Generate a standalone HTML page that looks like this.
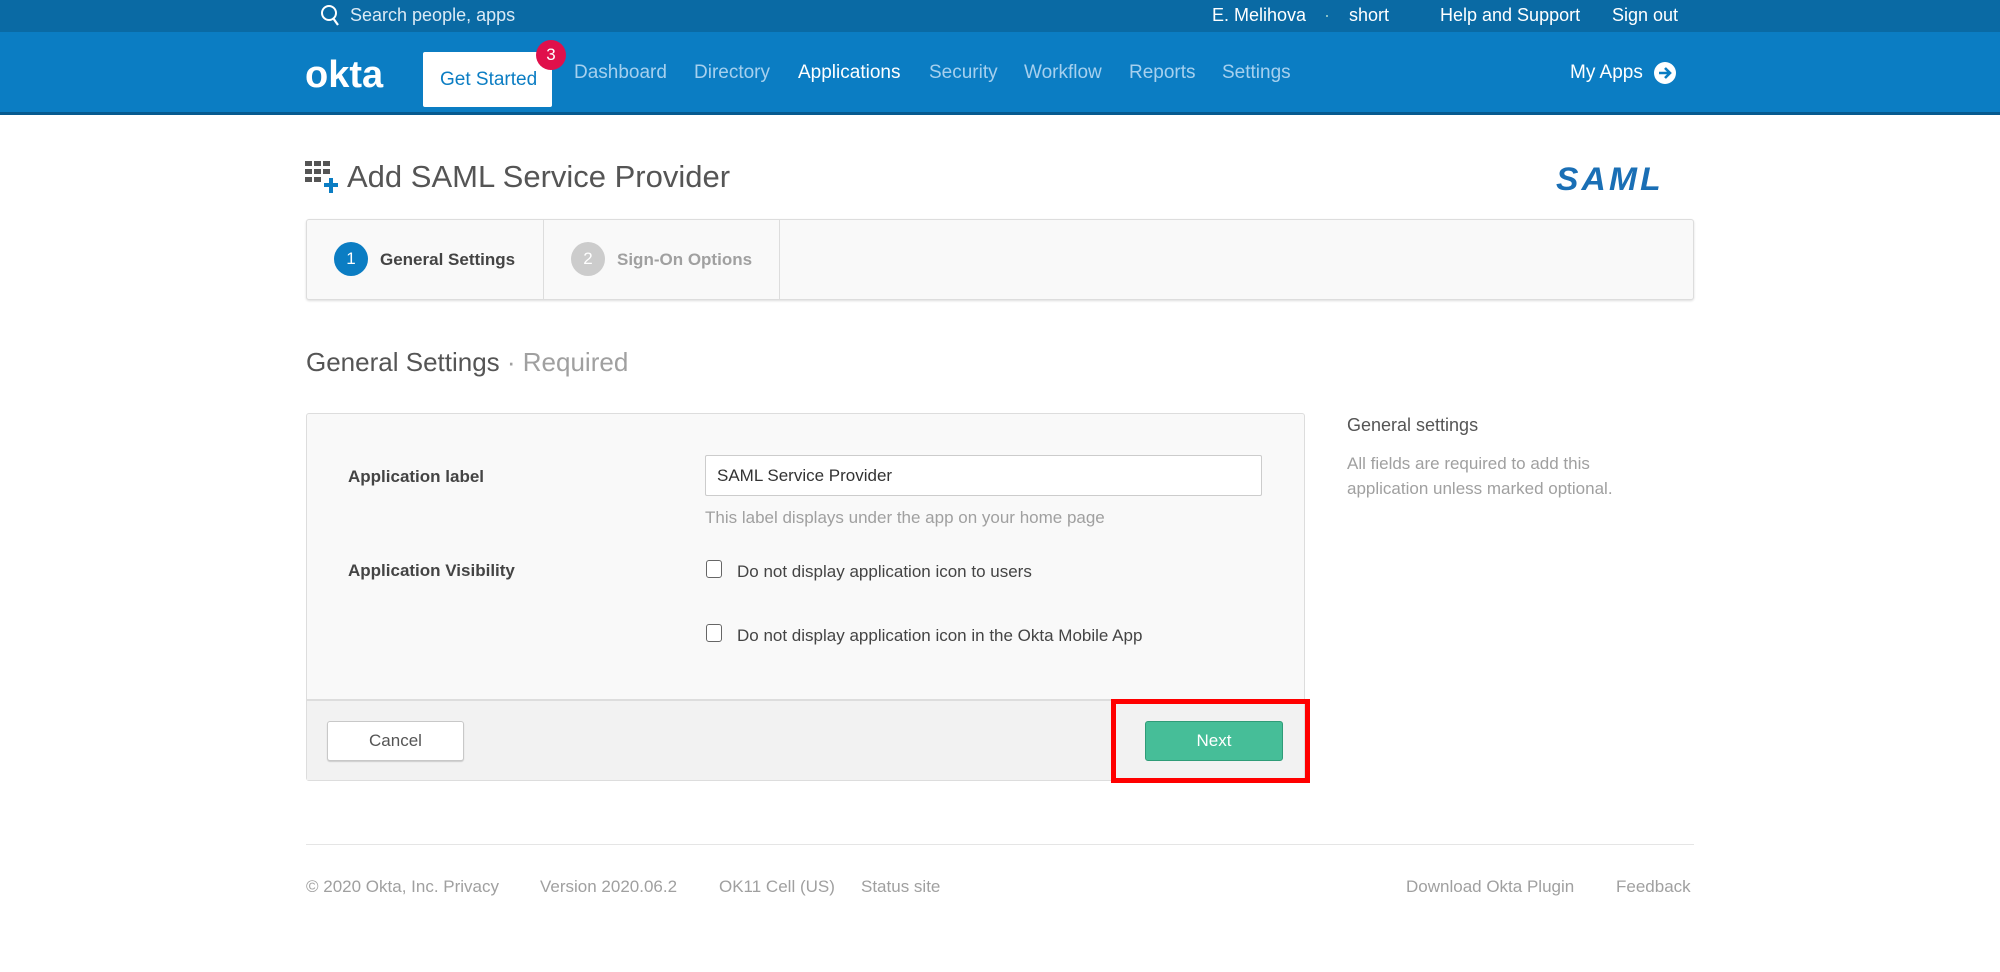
<!DOCTYPE html>
<html><head><meta charset="utf-8"><style>
*{margin:0;padding:0;box-sizing:border-box}
body{width:2000px;height:972px;background:#fff;font-family:"Liberation Sans",sans-serif;position:relative;overflow:hidden}
.a{position:absolute;white-space:nowrap;line-height:1}
#top{position:absolute;left:0;top:0;width:2000px;height:32px;background:#0a6aa4}
#nav{position:absolute;left:0;top:32px;width:2000px;height:83px;background:#0b7dc3;border-bottom:3px solid #075a8f}
.t{color:#fff;font-size:18px;top:6px}
.n{color:#a6d0ee;font-size:19px;top:63px}
.lbl{color:#444;font-size:17px;font-weight:bold}
.f{color:#a0a0a0;font-size:17px;top:878px}
</style></head><body>
<div id="top"></div>
<div id="nav"></div>
<svg class="a" style="left:319px;top:4px" width="22" height="24" viewBox="0 0 22 24"><circle cx="10" cy="9" r="7" fill="none" stroke="#fff" stroke-width="2"/><line x1="14" y1="14" x2="19" y2="21" stroke="#fff" stroke-width="2.2"/></svg>
<div class="a t" style="left:350px;color:#dbeaf5">Search people, apps</div>
<div class="a t" style="left:1212px">E. Melihova</div>
<div class="a t" style="left:1324px;color:#9cc">·</div>
<div class="a t" style="left:1349px">short</div>
<div class="a t" style="left:1440px">Help and Support</div>
<div class="a t" style="left:1612px">Sign out</div>
<div class="a" style="left:305px;top:56px;color:#fff;font-size:38px;font-weight:bold;letter-spacing:0px">okta</div>
<div class="a" style="left:423px;top:52px;width:129px;height:55px;background:#fff;border-radius:2px"></div>
<div class="a" style="left:440px;top:70px;color:#0b7dc3;font-size:19px">Get Started</div>
<div class="a" style="left:536px;top:40px;width:30px;height:30px;border-radius:50%;background:#e0104b;color:#fff;font-size:17px;text-align:center;line-height:30px">3</div>
<div class="a n" style="left:574px">Dashboard</div>
<div class="a n" style="left:694px">Directory</div>
<div class="a n" style="left:798px;color:#fff">Applications</div>
<div class="a n" style="left:929px">Security</div>
<div class="a n" style="left:1024px">Workflow</div>
<div class="a n" style="left:1129px">Reports</div>
<div class="a n" style="left:1222px">Settings</div>
<div class="a" style="left:1570px;top:63px;color:#fff;font-size:19px">My Apps</div>
<svg class="a" style="left:1653px;top:61px" width="24" height="24" viewBox="0 0 24 24"><circle cx="12" cy="12" r="11" fill="#fff"/><path d="M6 12h10M12 7l5 5-5 5" fill="none" stroke="#0b7dc3" stroke-width="2.6"/></svg>

<svg class="a" style="left:305px;top:161px" width="35" height="32" viewBox="0 0 35 32"><g fill="#555"><rect x="0" y="0" width="7" height="5"/><rect x="9" y="0" width="7" height="5"/><rect x="18" y="0" width="7" height="5"/><rect x="0" y="8" width="7" height="5"/><rect x="9" y="8" width="7" height="5"/><rect x="18" y="8" width="7" height="5"/><rect x="0" y="16" width="7" height="5"/><rect x="9" y="16" width="7" height="5"/></g><path d="M19 24h14M26 17v15" stroke="#0b7dc3" stroke-width="4"/></svg>
<div class="a" style="left:347px;top:161px;color:#555;font-size:31px">Add SAML Service Provider</div>
<div class="a" style="left:1556px;top:163px;color:#1a6fb5;font-size:32px;font-weight:bold;font-style:italic;letter-spacing:3px;transform:scaleX(1.05);transform-origin:left">SAML</div>

<div class="a" style="left:306px;top:219px;width:1388px;height:81px;background:#f9f9f9;border:1px solid #ddd;border-radius:3px;box-shadow:0 1px 2px #ddd"></div>
<div class="a" style="left:543px;top:220px;width:1px;height:79px;background:#ddd"></div>
<div class="a" style="left:779px;top:220px;width:1px;height:79px;background:#ddd"></div>
<div class="a" style="left:334px;top:242px;width:34px;height:34px;border-radius:50%;background:#0b7dc3;color:#fff;font-size:17px;text-align:center;line-height:34px">1</div>
<div class="a lbl" style="left:380px;top:251px;color:#444">General Settings</div>
<div class="a" style="left:571px;top:242px;width:34px;height:34px;border-radius:50%;background:#ccc;color:#fff;font-size:17px;text-align:center;line-height:34px">2</div>
<div class="a lbl" style="left:617px;top:251px;color:#a0a0a0">Sign-On Options</div>

<div class="a" style="left:306px;top:349px;color:#555;font-size:26px">General Settings <span style="color:#a0a0a0">· Required</span></div>

<div class="a" style="left:306px;top:413px;width:999px;height:368px;background:#f9f9f9;border:1px solid #ddd;border-radius:3px"></div>
<div class="a" style="left:307px;top:699px;width:997px;height:81px;background:#f2f2f2;border-top:2px solid #ddd"></div>
<div class="a lbl" style="left:348px;top:468px">Application label</div>
<div class="a" style="left:705px;top:455px;width:557px;height:41px;background:#fff;border:1px solid #ccc;border-radius:2px"></div>
<div class="a" style="left:717px;top:467px;color:#333;font-size:17px">SAML Service Provider</div>
<div class="a" style="left:705px;top:509px;color:#a0a0a0;font-size:17px">This label displays under the app on your home page</div>
<div class="a lbl" style="left:348px;top:562px">Application Visibility</div>
<div class="a" style="left:706px;top:560px;width:16px;height:18px;border:1.5px solid #666;border-radius:3px;background:#fff"></div>
<div class="a" style="left:737px;top:563px;color:#444;font-size:17px">Do not display application icon to users</div>
<div class="a" style="left:706px;top:624px;width:16px;height:18px;border:1.5px solid #666;border-radius:3px;background:#fff"></div>
<div class="a" style="left:737px;top:627px;color:#444;font-size:17px">Do not display application icon in the Okta Mobile App</div>
<div class="a" style="left:327px;top:721px;width:137px;height:40px;background:#fff;border:1px solid #c8c8c8;border-radius:3px;box-shadow:0 1px 1px #ccc;color:#555;font-size:17px;text-align:center;line-height:38px">Cancel</div>
<div class="a" style="left:1145px;top:721px;width:138px;height:40px;background:#46be98;border:1px solid #2f9c78;border-radius:3px;color:#fff;font-size:17px;text-align:center;line-height:38px">Next</div>
<div class="a" style="left:1111px;top:699px;width:199px;height:84px;border:5px solid #f00"></div>

<div class="a" style="left:1347px;top:416px;color:#555;font-size:18px">General settings</div>
<div class="a" style="left:1347px;top:451px;color:#a0a0a0;font-size:17px;line-height:25px;white-space:normal;width:320px">All fields are required to add this application unless marked optional.</div>

<div class="a" style="left:306px;top:844px;width:1388px;height:1px;background:#e5e5e5"></div>
<div class="a f" style="left:306px">© 2020 Okta, Inc. Privacy</div>
<div class="a f" style="left:540px">Version 2020.06.2</div>
<div class="a f" style="left:719px">OK11 Cell (US)</div>
<div class="a f" style="left:861px">Status site</div>
<div class="a f" style="left:1406px">Download Okta Plugin</div>
<div class="a f" style="left:1616px">Feedback</div>
</body></html>
